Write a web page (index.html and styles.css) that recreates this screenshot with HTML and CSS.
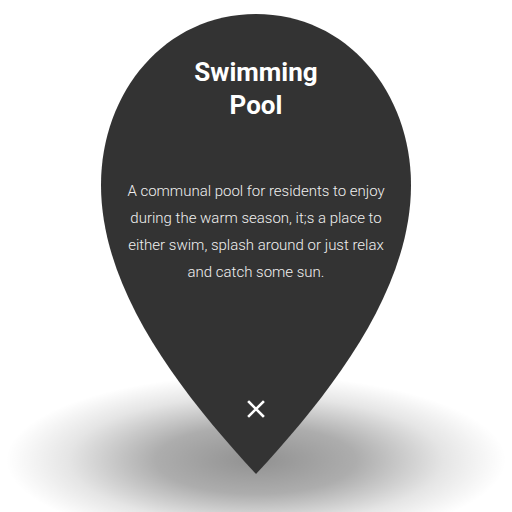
FILE: index.html
```html
<!DOCTYPE html>
<html>
<head>
<meta charset="utf-8">
<link rel="stylesheet" href="styles.css">
</head>
<body>
<div class="stage">
  <div class="shadow"></div>
  <svg class="pin" width="512" height="512" viewBox="0 0 512 512" aria-hidden="true">
    <path d="M256,14 C347,14 411,92 411,185 C411,290 332,392 256,474 C180,392 101,290 101,185 C101,92 165,14 256,14 Z" fill="#333333"/>
  </svg>
  <div class="content">
    <h1 class="title">Swimming<br>Pool</h1>
    <p class="desc">A communal pool for residents to enjoy during the warm season, it;s a place to either swim, splash around or just relax and catch some sun.</p>
    <button class="close" aria-label="Close">
      <svg width="18" height="18" viewBox="0 0 18 18"><path d="M2 2 L16 16 M16 2 L2 16" stroke="#fff" stroke-width="2.6" stroke-linecap="square" fill="none"/></svg>
    </button>
  </div>
</div>
</body>
</html>
```
FILE: styles.css
```css
html, body { margin: 0; padding: 0; background: #fff; }
.stage {
  position: relative;
  width: 512px;
  height: 512px;
  overflow: hidden;
  font-family: Roboto, "Liberation Sans", sans-serif;
}
.shadow {
  position: absolute;
  left: 6px;
  top: 375px;
  width: 500px;
  height: 170px;
  background: radial-gradient(ellipse closest-side at center, rgba(0,0,0,0.43) 0%, rgba(0,0,0,0.32) 40%, rgba(0,0,0,0.1) 75%, rgba(0,0,0,0) 100%);
}
.pin {
  position: absolute;
  left: 0;
  top: 0;
  display: block;
}
.content {
  position: relative;
  display: flex;
  flex-direction: column;
  align-items: center;
  padding-top: 56px;
  color: #fff;
  text-align: center;
}
.title {
  margin: 0;
  font-size: 26px;
  line-height: 33px;
  font-weight: 700;
}
.desc {
  margin: 56px 0 0;
  width: 262px;
  font-size: 15px;
  line-height: 27px;
  font-weight: 300;
  color: #f0f0f0;
}
.close {
  margin-top: 114px;
  padding: 0;
  border: 0;
  background: none;
  width: 18px;
  height: 18px;
  display: block;
}
.close svg { display: block; }
```
